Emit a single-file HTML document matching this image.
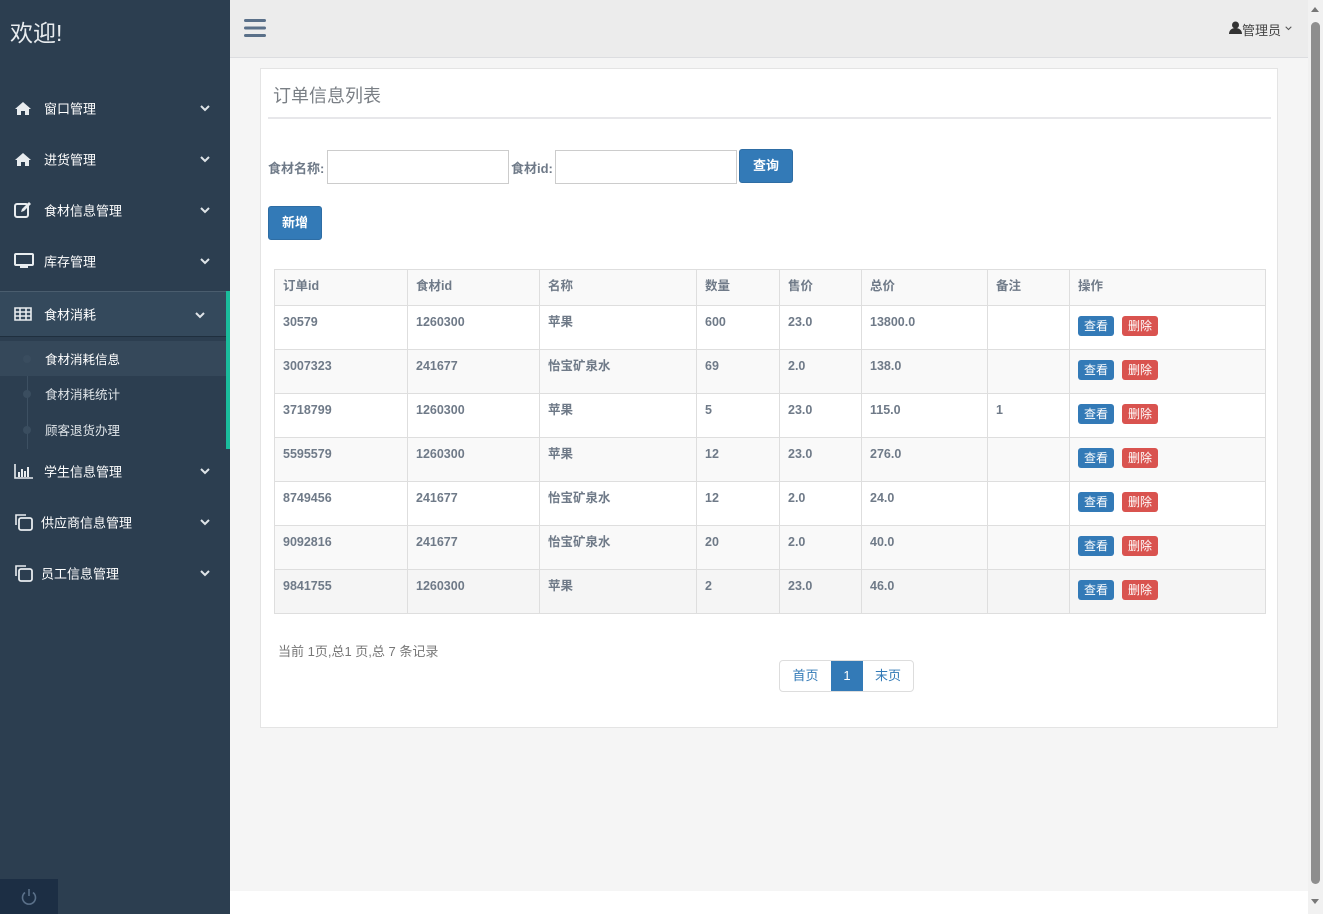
<!DOCTYPE html>
<html><head><meta charset="utf-8"><style>
*{box-sizing:border-box;margin:0;padding:0}
body{width:1323px;height:914px;overflow:hidden;font-family:"Liberation Sans","Noto Sans CJK SC",sans-serif;background:#fff;position:relative;font-size:13px}
.side{position:absolute;left:0;top:0;width:230px;height:914px;background:#2c3e50;color:#fff}
.logo{position:absolute;left:10px;top:14px;font-size:23px;color:#e8ecef}
.item{position:absolute;left:0;width:226px;height:50px;font-size:13px;color:#fff}
.item .ic{position:absolute;left:14px;top:50%;transform:translateY(-50%)}
.item .tx{position:absolute;left:44px;top:50%;transform:translateY(-50%)}
.item .ch{position:absolute;right:16px;top:22px}
.sub{position:absolute;left:0;width:226px;height:35px;font-size:12.5px;color:#dfe4e8}
.sub .tx{position:absolute;left:45px;top:8px}
.sub .dot{position:absolute;left:23px;top:14px;width:8px;height:8px;border-radius:50%;background:#3a4d5f}
.main{position:absolute;left:230px;top:0;width:1078px;height:891px;background:#f5f5f5}
.hdr{position:absolute;left:0;top:0;width:1078px;height:58px;background:#ececec;border-bottom:1px solid #dcdde0}
.panel{position:absolute;left:30px;top:68px;width:1018px;height:660px;background:#fff;border:1px solid #e4e4e4}
.btn{position:absolute;background:#337ab7;border:1px solid #2e6da4;color:#fff;border-radius:3px;font-size:13px;text-align:center;font-weight:bold}
table{position:absolute;left:13px;top:200px;border-collapse:collapse;width:992px;color:#6f7a88;font-weight:bold;font-size:12.5px;line-height:16px}
td,th{border:1px solid #dedede;text-align:left;vertical-align:top;padding:8px 8px 0;height:44px;background:#fff}
th{height:36px;padding-top:8px;background:#f9f9f9}
tr:nth-child(odd) td{background:#f9f9f9}
tr.h td{background:#f5f5f5}
.v,.d{display:inline-block;color:#fff;font-size:12px;line-height:16px;padding:2px 6px;border-radius:3px;margin-top:2px;font-weight:normal}
.v{background:#337ab7}.d{background:#d9534f;margin-left:8px}
.sb{position:absolute;left:1308px;top:0;width:15px;height:914px;background:#f1f1f1}
</style></head><body>
<svg width="0" height="0" style="position:absolute"><defs><symbol id="cv" viewBox="0 0 10 7"><path d="M1 1l4 4 4-4" fill="none" stroke="#dfe4e8" stroke-width="2"/></symbol></defs></svg>
<div class="side">
<div class="logo">欢迎!</div>
<div class="item" style="top:83px"><svg class="ic" width="18" height="14" viewBox="0 0 18 14"><path d="M9 1L1 8h2v6h4v-4h4v4h4V8h2z" fill="#e8ecef"/></svg><span class="tx">窗口管理</span><svg class="ch" width="10" height="7"><use href="#cv"/></svg></div>
<div class="item" style="top:134px"><svg class="ic" width="18" height="14" viewBox="0 0 18 14"><path d="M9 1L1 8h2v6h4v-4h4v4h4V8h2z" fill="#e8ecef"/></svg><span class="tx">进货管理</span><svg class="ch" width="10" height="7"><use href="#cv"/></svg></div>
<div class="item" style="top:185px"><svg class="ic" width="18" height="16" viewBox="0 0 18 16"><rect x="1" y="2" width="13" height="13" rx="2" fill="none" stroke="#e8ecef" stroke-width="2"/><path d="M7 10l1-3 7-7 2 2-7 7z" fill="#e8ecef"/></svg><span class="tx">食材信息管理</span><svg class="ch" width="10" height="7"><use href="#cv"/></svg></div>
<div class="item" style="top:236px"><svg class="ic" width="20" height="16" viewBox="0 0 20 16"><rect x="1" y="1" width="18" height="11" rx="1" fill="none" stroke="#e8ecef" stroke-width="2"/><rect x="6" y="13" width="8" height="2" fill="#e8ecef"/></svg><span class="tx">库存管理</span><svg class="ch" width="10" height="7"><use href="#cv"/></svg></div>
<div style="position:absolute;left:0;top:291px;width:226px;height:46px;background:#34495c;border-top:1px solid #4a5d6e;border-bottom:1px solid #1f2f3e"></div>
<div class="item" style="top:289px"><svg class="ic" width="18" height="14" viewBox="0 0 18 14"><path d="M1 1h16v12H1z M1 5h16 M1 9h16 M6 1v12 M12 1v12" fill="none" stroke="#e8ecef" stroke-width="1.6"/></svg><span class="tx">食材消耗</span><svg class="ch" width="10" height="7" style="right:21px;top:23px"><use href="#cv"/></svg></div>
<div style="position:absolute;left:226px;top:291px;width:4px;height:158px;background:#1abc9c"></div>
<div style="position:absolute;left:27px;top:342px;width:1px;height:107px;background:#3d5062"></div>
<div class="sub" style="top:341px;background:#35485a;color:#fff"><span class="dot"></span><span class="tx">食材消耗信息</span></div>
<div class="sub" style="top:376px"><span class="dot"></span><span class="tx">食材消耗统计</span></div>
<div class="sub" style="top:412px"><span class="dot"></span><span class="tx">顾客退货办理</span></div>
<div class="item" style="top:446px"><svg class="ic" width="20" height="16" viewBox="0 0 20 16"><path d="M1 1v14h18" fill="none" stroke="#e8ecef" stroke-width="1.6"/><path d="M4 9h2v5H4zM7 6h2v8H7zM10 8h2v6h-2zM13 4h2v10h-2z" fill="#e8ecef"/></svg><span class="tx">学生信息管理</span><svg class="ch" width="10" height="7"><use href="#cv"/></svg></div>
<div class="item" style="top:497px"><svg class="ic" width="20" height="18" viewBox="0 0 20 18"><path d="M2 12V2h10" fill="none" stroke="#e8ecef" stroke-width="1.6"/><rect x="5" y="5" width="13" height="12" rx="2" fill="none" stroke="#e8ecef" stroke-width="1.8"/></svg><span class="tx" style="left:41px">供应商信息管理</span><svg class="ch" width="10" height="7"><use href="#cv"/></svg></div>
<div class="item" style="top:548px"><svg class="ic" width="20" height="18" viewBox="0 0 20 18"><path d="M2 12V2h10" fill="none" stroke="#e8ecef" stroke-width="1.6"/><rect x="5" y="5" width="13" height="12" rx="2" fill="none" stroke="#e8ecef" stroke-width="1.8"/></svg><span class="tx" style="left:41px">员工信息管理</span><svg class="ch" width="10" height="7"><use href="#cv"/></svg></div>
<div style="position:absolute;left:0;top:879px;width:58px;height:35px;background:#1c2e44"><svg style="position:absolute;left:20px;top:9px" width="18" height="18" viewBox="0 0 18 18"><path d="M5 4.5A6.5 6.5 0 1 0 13 4.5" fill="none" stroke="#5a7089" stroke-width="1.6"/><path d="M9 1v7" stroke="#5a7089" stroke-width="1.6"/></svg></div>
</div>
<div class="main">
<div class="hdr">
<svg style="position:absolute;left:14px;top:18px" width="22" height="20" viewBox="0 0 22 20"><rect y="1" width="22" height="3" rx="1.5" fill="#5a7089"/><rect y="8.5" width="22" height="3" rx="1.5" fill="#5a7089"/><rect y="16" width="22" height="3" rx="1.5" fill="#5a7089"/></svg>
<svg style="position:absolute;left:999px;top:21px" width="13" height="13" viewBox="0 0 13 13"><circle cx="6.5" cy="4" r="3.5" fill="#333"/><path d="M0 13c0-4 3-6 6.5-6s6.5 2 6.5 6z" fill="#333"/></svg>
<div style="position:absolute;left:1012px;top:20px;font-size:13px;color:#444">管理员</div>
<svg style="position:absolute;left:1055px;top:26px" width="7" height="5" viewBox="0 0 10 7"><path d="M1 1l4 4 4-4" fill="none" stroke="#555" stroke-width="1.5"/></svg>
</div>
<div class="panel">
<div style="position:absolute;left:12px;top:13px;font-size:18px;color:#7a7f85">订单信息列表</div>
<div style="position:absolute;left:7px;top:48px;width:1003px;height:2px;background:#e7e7ea"></div>
<div style="position:absolute;left:7px;top:89px;font-weight:bold;color:#6f7a88">食材名称:</div>
<div style="position:absolute;left:66px;top:81px;width:182px;height:34px;border:1px solid #ccc"></div>
<div style="position:absolute;left:250px;top:89px;font-weight:bold;color:#6f7a88">食材id:</div>
<div style="position:absolute;left:294px;top:81px;width:182px;height:34px;border:1px solid #ccc"></div>
<div class="btn" style="left:478px;top:80px;width:54px;height:34px;line-height:32px">查询</div>
<div class="btn" style="left:7px;top:137px;width:54px;height:34px;line-height:32px">新增</div>
<table>
<tr><th style="width:133px">订单id</th><th style="width:132px">食材id</th><th style="width:157px">名称</th><th style="width:83px">数量</th><th style="width:82px">售价</th><th style="width:126px">总价</th><th style="width:82px">备注</th><th>操作</th></tr>
<tr><td>30579</td><td>1260300</td><td>苹果</td><td>600</td><td>23.0</td><td>13800.0</td><td></td><td><span class="v">查看</span><span class="d">删除</span></td></tr>
<tr><td>3007323</td><td>241677</td><td>怡宝矿泉水</td><td>69</td><td>2.0</td><td>138.0</td><td></td><td><span class="v">查看</span><span class="d">删除</span></td></tr>
<tr><td>3718799</td><td>1260300</td><td>苹果</td><td>5</td><td>23.0</td><td>115.0</td><td>1</td><td><span class="v">查看</span><span class="d">删除</span></td></tr>
<tr><td>5595579</td><td>1260300</td><td>苹果</td><td>12</td><td>23.0</td><td>276.0</td><td></td><td><span class="v">查看</span><span class="d">删除</span></td></tr>
<tr><td>8749456</td><td>241677</td><td>怡宝矿泉水</td><td>12</td><td>2.0</td><td>24.0</td><td></td><td><span class="v">查看</span><span class="d">删除</span></td></tr>
<tr><td>9092816</td><td>241677</td><td>怡宝矿泉水</td><td>20</td><td>2.0</td><td>40.0</td><td></td><td><span class="v">查看</span><span class="d">删除</span></td></tr>
<tr class="h"><td>9841755</td><td>1260300</td><td>苹果</td><td>2</td><td>23.0</td><td>46.0</td><td></td><td><span class="v">查看</span><span class="d">删除</span></td></tr>
</table>
<div style="position:absolute;left:17px;top:572px;color:#777;font-size:13px">当前 1页,总1 页,总 7 条记录</div>
<div style="position:absolute;left:518px;top:591px;height:32px;border:1px solid #ddd;border-radius:4px;display:flex;font-size:13px;overflow:hidden">
<span style="width:51px;line-height:30px;text-align:center;color:#337ab7">首页</span>
<span style="width:32px;line-height:30px;text-align:center;color:#fff;background:#337ab7">1</span>
<span style="width:50px;line-height:30px;text-align:center;color:#337ab7">末页</span>
</div>
</div>
</div>
<div class="sb"><div style="position:absolute;left:3px;top:22px;width:9px;height:862px;border-radius:5px;background:#8e8e8e"></div>
<div style="position:absolute;left:3px;top:7px;border:4px solid transparent;border-bottom:5px solid #777;border-top:0"></div>
<div style="position:absolute;left:3px;top:899px;border:4px solid transparent;border-top:5px solid #777;border-bottom:0"></div></div>
</body></html>
